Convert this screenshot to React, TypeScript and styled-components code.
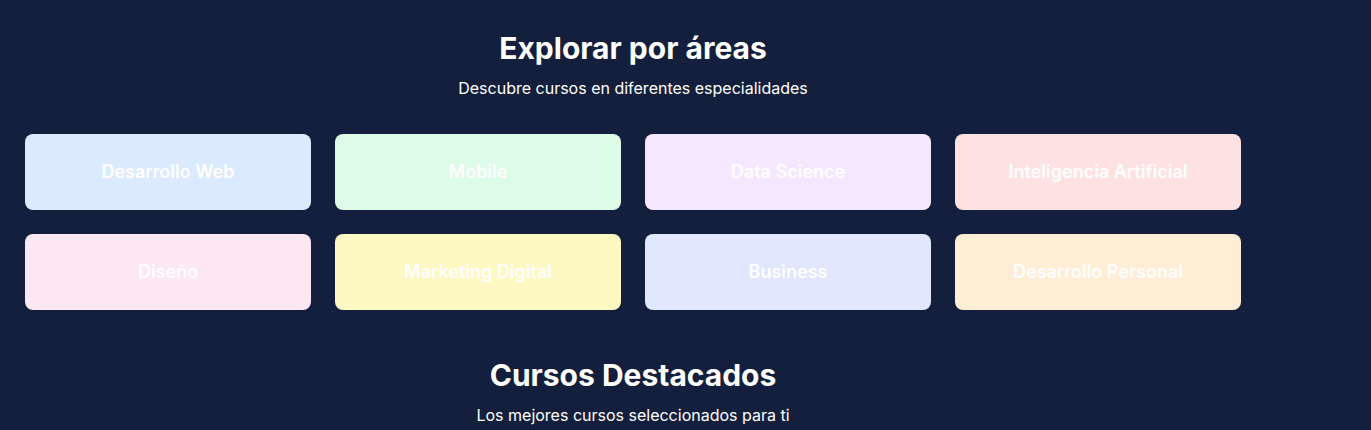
import React from "react";
import styled, { createGlobalStyle } from "styled-components";

const GlobalStyle = createGlobalStyle`
  html, body {
    margin: 0;
    padding: 0;
    background: #131f3c;
  }
  body {
    font-family: Inter, "Noto Sans", sans-serif;
    color: #ffffff;
  }
`;

const Page = styled.main`
  padding: 0 25px;
  min-height: 430px;
  background: #131f3c;
`;

const Container = styled.div`
  width: 1216px;
`;

const Section = styled.section<{ $top: number }>`
  padding-top: ${(p) => p.$top}px;
  display: flex;
  flex-direction: column;
  align-items: stretch;
`;

const Title = styled.h2`
  margin: 0;
  font-size: 30px;
  line-height: 36px;
  font-weight: 700;
  text-align: center;
  color: #ffffff;
`;

const Subtitle = styled.p`
  margin: 10px 0 0;
  font-size: 16px;
  line-height: 24px;
  font-weight: 400;
  text-align: center;
  color: #ffffff;
`;

const Grid = styled.div`
  margin-top: 34px;
  display: grid;
  grid-template-columns: repeat(4, 1fr);
  gap: 24px;
`;

const Card = styled.a<{ $bg: string }>`
  height: 76px;
  padding-bottom: 1px;
  box-sizing: border-box;
  border-radius: 8px;
  background: ${(p) => p.$bg};
  display: flex;
  align-items: center;
  justify-content: center;
  color: #ffffff;
  font-size: 18px;
  line-height: 28px;
  font-weight: 600;
  text-decoration: none;
`;

const areas = [
  { name: "Desarrollo Web", bg: "#dbeafe" },
  { name: "Mobile", bg: "#dcfce7" },
  { name: "Data Science", bg: "#f3e8ff" },
  { name: "Inteligencia Artificial", bg: "#fee2e2" },
  { name: "Diseño", bg: "#fce7f3" },
  { name: "Marketing Digital", bg: "#fef9c3" },
  { name: "Business", bg: "#e0e7ff" },
  { name: "Desarrollo Personal", bg: "#ffedd5" },
];

export default function App() {
  return (
    <>
      <GlobalStyle />
      <Page>
        <Container>
          <Section $top={30}>
            <Title>Explorar por áreas</Title>
            <Subtitle>Descubre cursos en diferentes especialidades</Subtitle>
            <Grid>
              {areas.map((a) => (
                <Card key={a.name} $bg={a.bg} href="#">
                  {a.name}
                </Card>
              ))}
            </Grid>
          </Section>
          <Section $top={47}>
            <Title>Cursos Destacados</Title>
            <Subtitle>Los mejores cursos seleccionados para ti</Subtitle>
          </Section>
        </Container>
      </Page>
    </>
  );
}
